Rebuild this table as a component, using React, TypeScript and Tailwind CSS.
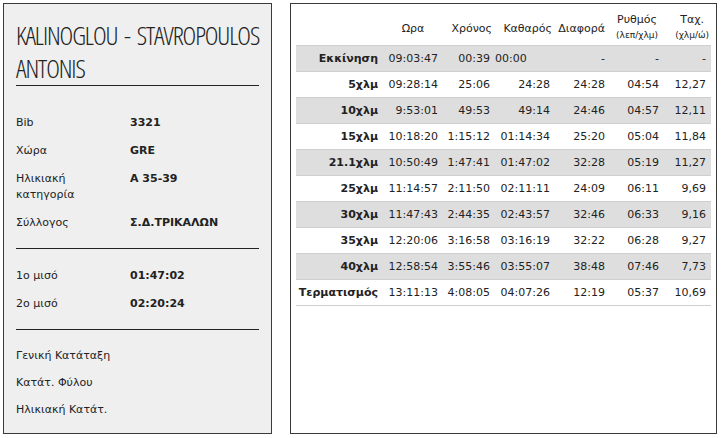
import React from "react";

const info = [
  { label: "Bib", value: "3321" },
  { label: "Χώρα", value: "GRE" },
  { label: "Ηλικιακή κατηγορία", value: "A 35-39" },
  { label: "Σύλλογος", value: "Σ.Δ.ΤΡΙΚΑΛΩΝ" },
];

const halves = [
  { label: "1ο μισό", value: "01:47:02" },
  { label: "2ο μισό", value: "02:20:24" },
];

const ranks = ["Γενική Κατάταξη", "Κατάτ. Φύλου", "Ηλικιακή Κατάτ."];

const splits = [
  ["Εκκίνηση", "09:03:47", "00:39", "00:00", "-", "-", "-"],
  ["5χλμ", "09:28:14", "25:06", "24:28", "24:28", "04:54", "12,27"],
  ["10χλμ", "9:53:01", "49:53", "49:14", "24:46", "04:57", "12,11"],
  ["15χλμ", "10:18:20", "1:15:12", "01:14:34", "25:20", "05:04", "11,84"],
  ["21.1χλμ", "10:50:49", "1:47:41", "01:47:02", "32:28", "05:19", "11,27"],
  ["25χλμ", "11:14:57", "2:11:50", "02:11:11", "24:09", "06:11", "9,69"],
  ["30χλμ", "11:47:43", "2:44:35", "02:43:57", "32:46", "06:33", "9,16"],
  ["35χλμ", "12:20:06", "3:16:58", "03:16:19", "32:22", "06:28", "9,27"],
  ["40χλμ", "12:58:54", "3:55:46", "03:55:07", "38:48", "07:46", "7,73"],
  ["Τερματισμός", "13:11:13", "4:08:05", "04:07:26", "12:19", "05:37", "10,69"],
];

function AthleteCard() {
  return (
    <div className="w-[269px] h-[431px] border border-[#3a3a3a] bg-[#efefef] px-3 pt-[15px] text-[#222]">
      <h1 className="font-['Open_Sans'] font-light font-stretch-condensed text-[26px] leading-[33px] border-b border-[#222] tracking-[-1.1px] [word-spacing:3px] whitespace-nowrap">
        KALINOGLOU - STAVROPOULOS
        <br />
        ANTONIS
      </h1>

      <div className="mt-[23px]">
        {info.map((row) => (
          <div key={row.label} className="flex py-[6px] leading-4">
            <div className="w-[114px] pr-4">{row.label}</div>
            <div className="font-bold">{row.value}</div>
          </div>
        ))}
      </div>

      <div className="mt-[11px] border-t border-[#222]" />
      <div className="mt-[13px]">
        {halves.map((row) => (
          <div key={row.label} className="flex py-[6px] leading-4">
            <div className="w-[114px]">{row.label}</div>
            <div className="font-bold">{row.value}</div>
          </div>
        ))}
      </div>

      <div className="mt-[11px] border-t border-[#222]" />
      <div className="mt-[13px]">
        {ranks.map((r) => (
          <div key={r} className="h-[27px] flex items-center">
            {r}
          </div>
        ))}
      </div>
    </div>
  );
}

function SplitsTable() {
  const widths = ["w-[87px]", "w-[60px]", "w-[52px]", "w-[60px]", "w-[55px]", "w-[54px]", "w-[47px]"];
  return (
    <div className="w-[427px] h-[431px] border border-[#3a3a3a] bg-white pl-[5px] pt-[5px] text-[#222]">
      <table className="table-fixed border-collapse w-[415px]">
        <colgroup>
          {widths.map((w, i) => (
            <col key={i} className={w} />
          ))}
        </colgroup>
        <thead>
          <tr className="h-[36px] border-b border-[#cfcfcf]">
            <th />
            <th className="font-normal text-center pt-1 align-middle">Ωρα</th>
            <th className="font-normal text-right pr-[3px] pt-1 align-middle">Χρόνος</th>
            <th className="font-normal text-right pr-[3px] pt-1 align-middle">Καθαρός</th>
            <th className="font-normal text-right pr-[5px] pt-1 align-middle">Διαφορά</th>
            <th className="font-normal text-right pr-[6px] pb-[1px] align-bottom">
              <div className="inline-block text-center">
                <div className="leading-4">Ρυθμός</div>
                <div className="text-[9px] leading-[14px]">(λεπ/χλμ)</div>
              </div>
            </th>
            <th className="font-normal text-right pr-[2px] pb-[1px] align-bottom">
              <div className="inline-block text-center">
                <div className="leading-4">Ταχ.</div>
                <div className="text-[9px] leading-[14px]">(χλμ/ώ)</div>
              </div>
            </th>
          </tr>
        </thead>
        <tbody>
          {splits.map((row, i) => (
            <tr
              key={row[0]}
              className={`h-[26px] border-b border-[#cfcfcf] ${i % 2 === 0 && i < 9 ? "bg-[#dedede]" : ""}`}
            >
              {row.map((cell, j) => (
                <td
                  key={j}
                  className={`text-right whitespace-nowrap pt-[2px] ${j === 0 ? "font-bold" : ""} ${
                    i === 0 && j === 3 ? "pr-[33px]" : "pr-[5px]"
                  }`}
                >
                  {cell}
                </td>
              ))}
            </tr>
          ))}
        </tbody>
      </table>
    </div>
  );
}

export default function App() {
  return (
    <div className="w-[721px] h-[438px] bg-white pl-[3px] pt-[3px] flex gap-[18px] font-['DejaVu_Sans',sans-serif] text-[11px]">
      <AthleteCard />
      <SplitsTable />
    </div>
  );
}
